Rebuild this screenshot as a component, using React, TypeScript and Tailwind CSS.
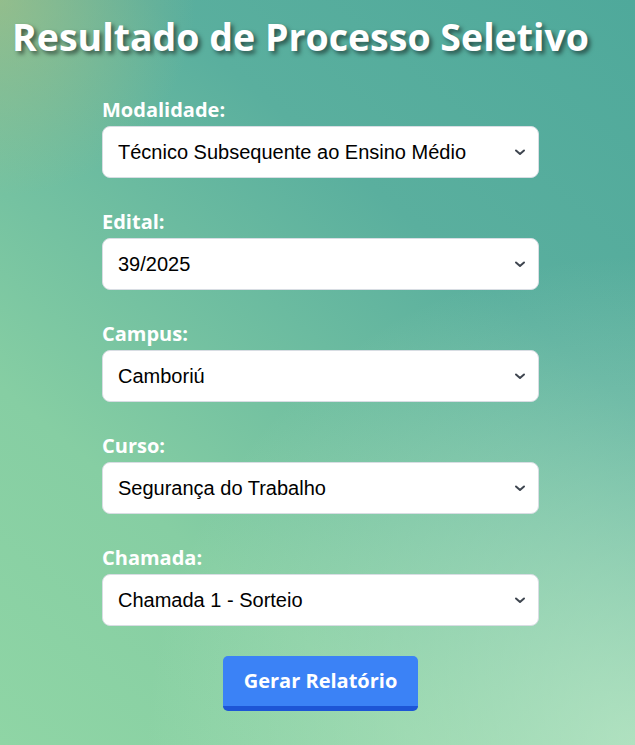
import { useState } from "react";

const fields = [
  { id: "modalidade", label: "Modalidade:", options: ["Técnico Subsequente ao Ensino Médio", "Técnico Integrado ao Ensino Médio"] },
  { id: "edital", label: "Edital:", options: ["39/2025", "38/2025"] },
  { id: "campus", label: "Campus:", options: ["Camboriú", "Araquari", "Blumenau"] },
  { id: "curso", label: "Curso:", options: ["Segurança do Trabalho", "Informática", "Agropecuária"] },
  { id: "chamada", label: "Chamada:", options: ["Chamada 1 - Sorteio", "Chamada 2"] },
];

function Chevron() {
  return (
    <svg
      width="12"
      height="8"
      viewBox="0 0 12 8"
      fill="none"
      stroke="#3f4650"
      strokeWidth="2"
      strokeLinecap="round"
      strokeLinejoin="round"
      className="pointer-events-none absolute right-[13px] top-1/2 -translate-y-1/2"
    >
      <path d="M2 2.5l4 3.5 4-3.5" />
    </svg>
  );
}

export default function App() {
  const [values, setValues] = useState<Record<string, string>>(
    Object.fromEntries(fields.map(f => [f.id, f.options[0]]))
  );

  return (
    <div className="min-h-[745px] w-full bg-[radial-gradient(circle_at_100%_100%,rgba(200,238,205,0.7),transparent_50%),radial-gradient(circle_at_0%_0%,rgba(185,195,125,0.55),transparent_20%),linear-gradient(220deg,#4fa99b_0%,#5aaf9e_32%,#86cea3_72%,#8fd5a5_100%)] px-[12px] pt-[12px] pb-8">
      <h1 className="font-['Open_Sans',sans-serif] text-[37.5px] font-bold leading-[50px] text-white [text-shadow:3px_3px_4px_rgba(0,0,0,0.5)]">
        Resultado de Processo Seletivo
      </h1>

      <form className="ml-[90px] mt-[34px] flex w-[437px] flex-col gap-[30px]" onSubmit={e => e.preventDefault()}>
        {fields.map(f => (
          <div key={f.id} className="flex flex-col gap-[2px]">
            <label htmlFor={f.id} className="font-['Open_Sans',sans-serif] text-xl font-bold leading-[28px] text-white">
              {f.label}
            </label>
            <div className="relative">
              <select
                id={f.id}
                value={values[f.id]}
                onChange={e => setValues({ ...values, [f.id]: e.target.value })}
                className="h-[52px] w-full appearance-none rounded-lg border border-[#d8dde3] bg-white pl-[15px] pr-10 font-['Liberation_Sans',Arial,sans-serif] text-xl text-black outline-none"
              >
                {f.options.map(o => (
                  <option key={o}>{o}</option>
                ))}
              </select>
              <Chevron />
            </div>
          </div>
        ))}

        <div className="flex justify-center">
          <button
            type="submit"
            className="h-[55px] rounded-[5px] border-b-[5px] border-[#1d55d6] bg-[#3b82f6] px-[21px] font-['Open_Sans',sans-serif] text-xl font-bold text-white"
          >
            Gerar Relatório
          </button>
        </div>
      </form>
    </div>
  );
}
